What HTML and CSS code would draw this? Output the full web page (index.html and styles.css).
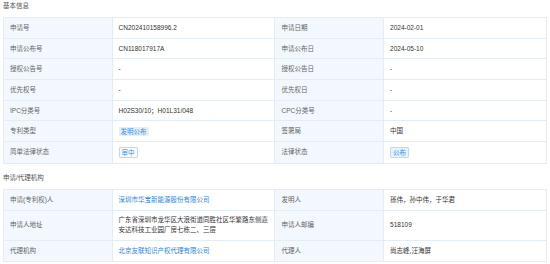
FILE: index.html
```html
<!DOCTYPE html>
<html lang="zh-CN">
<head>
    <meta charset="UTF-8">
    <title>专利详情</title>
    <link rel="stylesheet" href="styles.css">
</head>
<body>
    <div class="page">
        <section class="block">
            <div class="block-title">基本信息</div>
            <table class="info-table">
                <colgroup>
                    <col class="col-label"><col class="col-value"><col class="col-label"><col class="col-value">
                </colgroup>
                <tr>
                    <td class="label">申请号</td><td>CN202410158996.2</td>
                    <td class="label">申请日期</td><td>2024-02-01</td>
                </tr>
                <tr>
                    <td class="label">申请公布号</td><td>CN118017917A</td>
                    <td class="label">申请公布日</td><td>2024-05-10</td>
                </tr>
                <tr>
                    <td class="label">授权公告号</td><td>-</td>
                    <td class="label">授权公告日</td><td>-</td>
                </tr>
                <tr>
                    <td class="label">优先权号</td><td>-</td>
                    <td class="label">优先权日</td><td>-</td>
                </tr>
                <tr>
                    <td class="label">IPC分类号</td><td>H02S30/10；H01L31/048</td>
                    <td class="label">CPC分类号</td><td>-</td>
                </tr>
                <tr>
                    <td class="label">专利类型</td><td><span class="tag">发明公布</span></td>
                    <td class="label">签署局</td><td>中国</td>
                </tr>
                <tr>
                    <td class="label">简单法律状态</td><td><span class="tag tag-outline">审中</span></td>
                    <td class="label">法律状态</td><td><span class="tag tag-outline tag-fill">公布</span></td>
                </tr>
            </table>
        </section>

        <section class="block">
            <div class="block-title">申请/代理机构</div>
            <table class="info-table">
                <colgroup>
                    <col class="col-label"><col class="col-value"><col class="col-label"><col class="col-value">
                </colgroup>
                <tr>
                    <td class="label">申请(专利权)人</td><td><a href="#">深圳市华宝新能源股份有限公司</a></td>
                    <td class="label">发明人</td><td>孫伟，孙中伟，于华君</td>
                </tr>
                <tr>
                    <td class="label">申请人地址</td><td class="wrap">广东省深圳市龙华区大浪街道同胜社区华繁路东侧嘉安达科技工业园厂房七栋二、三层</td>
                    <td class="label">申请人邮编</td><td>518109</td>
                </tr>
                <tr>
                    <td class="label">代理机构</td><td><a href="#">北京友联知识产权代理有限公司</a></td>
                    <td class="label">代理人</td><td>尚志峰,汪海屏</td>
                </tr>
            </table>
        </section>
    </div>
</body>
</html>
```

FILE: styles.css
```css
:root {
    --label-bg: #f2f8fd;
    --border-color: #e4edf4;
    --label-color: #666;
    --text-color: #333;
    --link-color: #2f86e0;
}

body {
    margin: 0;
    padding: 0;
    background-color: #fff;
    color: var(--text-color);
    font-family: 'Liberation Sans', 'Noto Sans CJK SC', sans-serif;
    font-size: 6.5px;
    line-height: 10px;
}

.page {
    padding: 0 3px;
}

.block + .block {
    margin-top: 8px;
}

.block-title {
    padding-top: 1px;
    margin-bottom: 6px;
    color: #555;
}

.info-table {
    width: 100%;
    table-layout: fixed;
    border-collapse: collapse;
}

.col-label {
    width: 20%;
}

.col-value {
    width: 30%;
}

.info-table td {
    border: 1px solid var(--border-color);
    padding: 4.85px 4px 4.85px 6px;
    vertical-align: middle;
    white-space: nowrap;
}

.info-table td.wrap {
    white-space: normal;
}

.info-table td.label {
    background-color: var(--label-bg);
    color: var(--label-color);
}

.info-table a {
    color: var(--link-color);
    text-decoration: none;
}

.tag {
    display: inline-block;
    padding: 0 2px;
    line-height: 9px;
    background-color: #e3f0fc;
    color: #3b8ee3;
    border-radius: 1px;
    vertical-align: middle;
}

.tag-outline {
    background-color: #f8fbff;
    border: 1px solid #bcdaf6;
}

.tag-fill {
    background-color: #e8f3fd;
}
```
